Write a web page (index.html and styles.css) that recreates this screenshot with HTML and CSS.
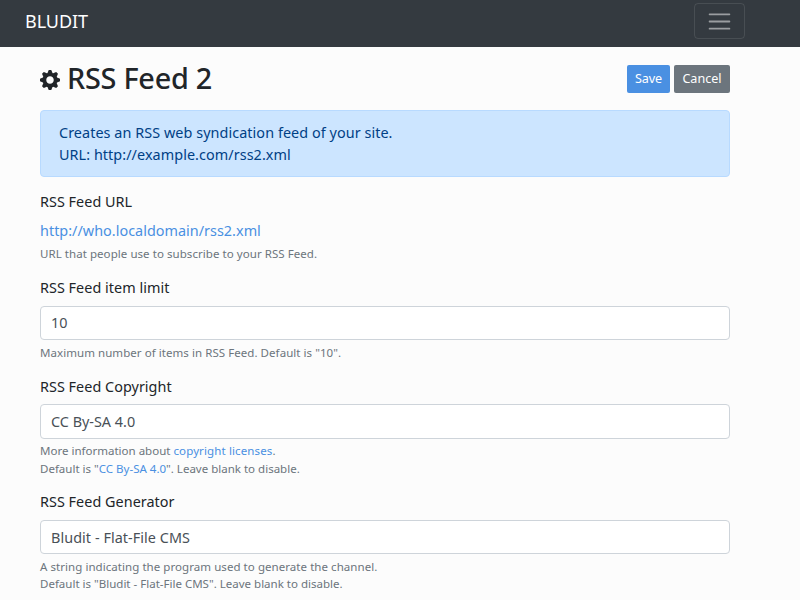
FILE: index.html
```html
<!DOCTYPE html>
<html lang="en">
<head>
<meta charset="utf-8">
<title>Bludit</title>
<link rel="stylesheet" href="styles.css">
</head>
<body>
<nav class="navbar">
  <span class="brand">BLUDIT</span>
  <button class="toggler" type="button" aria-label="Menu">
    <svg viewBox="0 0 30 30" width="27" height="27"><path d="M4 7h22M4 15h22M4 23h22" stroke="rgba(255,255,255,.5)" stroke-width="2" stroke-linecap="round" stroke-miterlimit="10"/></svg>
  </button>
</nav>
<main class="container">
  <header class="heading">
    <h2 class="title">
      <svg class="cog" viewBox="0 0 8 8"><path fill="currentColor" d="M3.5 0l-.5 1.190c-.1.03-.19.08-.28.13l-1.190-.5-.72.72.5 1.190c-.05.1-.09.18-.13.28l-1.190.5v1l1.190.5c.04.1.08.18.13.28l-.5 1.190.72.72 1.190-.5c.09.04.18.09.28.13l.5 1.190h1l.5-1.190c.09-.04.19-.08.28-.13l1.190.5.72-.72-.5-1.190c.04-.09.09-.19.13-.28l1.190-.5v-1l-1.190-.5c-.03-.09-.08-.19-.13-.28l.5-1.190-.72-.72-1.190.5c-.09-.04-.19-.09-.28-.13l-.5-1.190h-1zm.5 2.500c.83 0 1.500.67 1.500 1.500s-.67 1.500-1.500 1.500-1.500-.67-1.500-1.500.67-1.500 1.500-1.500z"/></svg>
      <span>RSS Feed 2</span>
    </h2>
    <div class="actions">
      <button class="btn primary" type="button">Save</button>
      <button class="btn secondary" type="button">Cancel</button>
    </div>
  </header>
  <div class="alert">Creates an RSS web syndication feed of your site.<br>URL: http://example.com/rss2.xml</div>
  <form>
    <div class="field">
      <label>RSS Feed URL</label>
      <a class="feed" href="#">http://who.localdomain/rss2.xml</a>
      <span class="tip">URL that people use to subscribe to your RSS Feed.</span>
    </div>
    <div class="field limit">
      <label for="limit">RSS Feed item limit</label>
      <input id="limit" type="text" value="10">
      <span class="tip">Maximum number of items in RSS Feed. Default is "10".</span>
    </div>
    <div class="field copyright">
      <label for="copyright">RSS Feed Copyright</label>
      <input id="copyright" type="text" value="CC By-SA 4.0">
      <span class="tip">More information about <a class="licenses" href="#">copyright licenses</a>.<br>Default is "<a href="#">CC By-SA 4.0</a>". Leave blank to disable.</span>
    </div>
    <div class="field generator">
      <label for="generator">RSS Feed Generator</label>
      <input id="generator" type="text" value="Bludit - Flat-File CMS">
      <span class="tip">A string indicating the program used to generate the channel.<br><span class="default">Default is "Bludit - Flat-File CMS". Leave blank to disable.</span></span>
    </div>
  </form>
</main>
</body>
</html>
```
FILE: styles.css
```css
* { box-sizing: border-box; }
html { font-size: 14.4px; }
body {
  margin: 0;
  height: 600px;
  overflow: hidden;
  background: #fcfcfc;
  color: #212529;
  font: 14.4px/1.5 "Noto Sans", sans-serif;
}
a { color: #4a90e2; text-decoration: none; }
.navbar {
  display: flex;
  justify-content: space-between;
  height: 47px;
  padding: 3px 55px 0 25px;
  background: #343a40;
}
.brand { color: #fff; font-size: 18px; line-height: 37px; letter-spacing: -.05px; }
.toggler {
  display: flex;
  align-items: center;
  justify-content: center;
  width: 51px;
  height: 36px;
  padding: 0;
  border: 1px solid rgba(255, 255, 255, .1);
  border-radius: 4px;
  background: none;
}
.container { width: 690px; margin-left: 40px; }
.heading {
  display: flex;
  justify-content: space-between;
  height: 63px;
  padding-top: 13px;
}
.title {
  display: flex;
  gap: 7px;
  margin: 0;
  font-size: 28.8px;
  font-weight: 500;
  letter-spacing: -.24px;
  line-height: 35px;
}
.cog { width: 20px; height: 20px; margin-top: 10px; }
.actions { display: flex; gap: 4px; padding-top: 5px; }
.btn {
  height: 28px;
  padding: 0;
  border: 0;
  border-radius: 2px;
  color: #fff;
  font: 12.6px/28px "Noto Sans", sans-serif;
}
.primary { width: 43px; background: #4a90e2; letter-spacing: -.1px; }
.secondary { width: 56px; background: #6c757d; }
.alert {
  height: 67px;
  margin-bottom: 14px;
  padding: 11px 18px;
  border: 1px solid #b8daff;
  border-radius: 4px;
  background: #cce5ff;
  color: #004085;
  letter-spacing: .06px;
  line-height: 21.6px;
}
.field { height: 86px; }
.limit { height: 99px; }
.copyright { height: 115px; }
.field label { display: block; height: 29px; line-height: 22px; letter-spacing: .03px; }
.feed { display: block; height: 22px; line-height: 22px; letter-spacing: .02px; }
input {
  display: block;
  width: 100%;
  height: 34px;
  padding: 0 10px 1px;
  border: 1px solid #ced4da;
  border-radius: 4px;
  background: #fff;
  color: #495057;
  font: 14.4px "Noto Sans", sans-serif;
}
.copyright label { height: 28px; }
.copyright input { height: 35px; padding-bottom: 0; }
.generator input { padding-bottom: 0; letter-spacing: .06px; }
.tip {
  display: block;
  padding-top: 3px;
  color: #6c757d;
  font-size: 11.52px;
  letter-spacing: .05px;
  line-height: 17.3px;
}
.limit .tip, .generator .tip { padding-top: 4px; }
.copyright .tip { line-height: 18px; letter-spacing: 0; }
.licenses { letter-spacing: .12px; }
.default { letter-spacing: 0; }
```
